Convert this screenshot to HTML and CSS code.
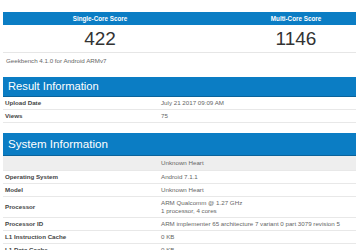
FILE: index.html
```html
<!DOCTYPE html>
<html lang="en">
  <head>
    <meta charset="UTF-8" />
    <title>Geekbench Result</title>
    <link rel="stylesheet" href="styles.css">
  </head>
  <body>
    <div class="page">
      <div class="scores">
        <div class="score-head">Single-Core Score</div>
        <div class="score-head right">Multi-Core Score</div>
        <div class="score-value">422</div>
        <div class="score-value right">1146</div>
      </div>
      <div class="version">Geekbench 4.1.0 for Android ARMv7</div>

      <h2 class="section-bar">Result Information</h2>
      <table class="info">
        <tr>
          <td class="name">Upload Date</td>
          <td class="value">July 21 2017 09:09 AM</td>
        </tr>
        <tr>
          <td class="name">Views</td>
          <td class="value">75</td>
        </tr>
      </table>

      <h2 class="section-bar system">System Information</h2>
      <table class="info">
        <tr class="device-row">
          <td class="name"></td>
          <td class="value">Unknown Heart</td>
        </tr>
        <tr>
          <td class="name">Operating System</td>
          <td class="value">Android 7.1.1</td>
        </tr>
        <tr>
          <td class="name">Model</td>
          <td class="value">Unknown Heart</td>
        </tr>
        <tr>
          <td class="name">Processor</td>
          <td class="value">ARM Qualcomm @ 1.27 GHz<br />1 processor, 4 cores</td>
        </tr>
        <tr>
          <td class="name">Processor ID</td>
          <td class="value">ARM implementer 65 architecture 7 variant 0 part 3079 revision 5</td>
        </tr>
        <tr>
          <td class="name">L1 Instruction Cache</td>
          <td class="value">0 KB</td>
        </tr>
        <tr>
          <td class="name">L1 Data Cache</td>
          <td class="value">0 KB</td>
        </tr>
      </table>
    </div>
  </body>
</html>
```

FILE: styles.css
```css
* {
  margin: 0;
  padding: 0;
  box-sizing: border-box;
}

body {
  background: #ffffff;
  font-family: "Liberation Sans", Arial, sans-serif;
  color: #555555;
  overflow: hidden;
}

.page {
  width: 359px;
  padding: 12px 3px 0;
}

.scores {
  display: grid;
  grid-template-columns: 194px 1fr;
  border-bottom: 1px solid #e6e6e6;
}

.score-head {
  background: #0b7dc4;
  color: #ffffff;
  font-size: 6.3px;
  font-weight: bold;
  height: 13px;
  line-height: 13px;
  text-align: center;
}

.score-value {
  font-size: 19px;
  line-height: 27px;
  color: #333333;
  text-align: center;
}

.right {
  padding-left: 39px;
}

.version {
  font-size: 6.2px;
  line-height: 8px;
  padding: 4px 0 0 3px;
  margin-bottom: 12px;
  color: #666666;
}

.section-bar {
  background: #0b7dc4;
  border-bottom: 1px solid #0a639b;
  color: #ffffff;
  font-size: 11.2px;
  font-weight: normal;
  height: 20px;
  line-height: 19px;
  padding-left: 5px;
}

.section-bar.system {
  margin-top: 10px;
  height: 23px;
  line-height: 22px;
  font-size: 11.6px;
}

.info {
  width: 100%;
  border-collapse: collapse;
  font-size: 6.2px;
}

.info td {
  line-height: 8px;
  padding: 2px 0 2px;
  border-bottom: 1px solid #e8e8e8;
  vertical-align: middle;
}

.info .name {
  width: 158px;
  padding-left: 2px;
  font-weight: bold;
  color: #444444;
}

.info .value {
  color: #666666;
}

.device-row td {
  background: #eeeeee;
  padding: 3px 0 3px;
  color: #444444;
}
```
